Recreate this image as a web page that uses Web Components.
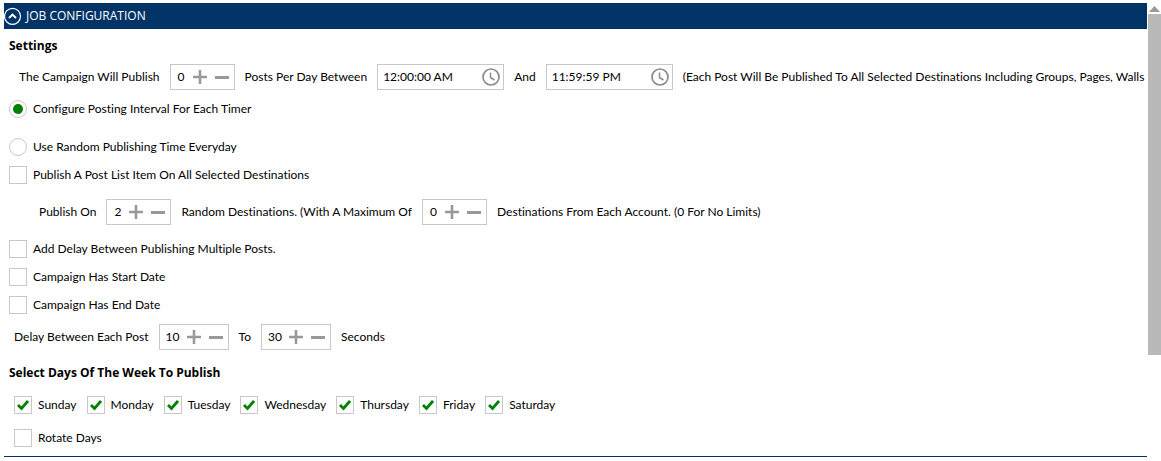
<!DOCTYPE html>
<html lang="en">
<head>
<meta charset="utf-8">
<title>Job Configuration</title>
<style>
  html, body {
    height: 100%;
    margin: 0;
  }
  body {
    background: #fff;
    color: #000;
    font: 12px/16px Lato, "Noto Sans", sans-serif;
    font-variant-ligatures: none;
    --heading-font: "Open Sans", "Noto Sans", sans-serif;
    --navy: #003366;
    --line: #c8c8c8;
    --glyph: #999;
    --green: #008000;
  }
</style>
</head>
<body>
<scroll-frame>
  <config-panel heading="JOB CONFIGURATION">
    <panel-title>Settings</panel-title>
    <field-row level="2">
      <span>The Campaign Will Publish</span>
      <number-stepper value="0" label="Posts per day"></number-stepper>
      <span>Posts Per Day Between</span>
      <time-box value="12:00:00 AM" label="Start time"></time-box>
      <span>And</span>
      <time-box value="11:59:59 PM" label="End time"></time-box>
      <span>(Each Post Will Be Published To All Selected Destinations Including Groups, Pages, Walls</span>
    </field-row>
    <radio-set options='["Configure Posting Interval For Each Timer", "Use Random Publishing Time Everyday"]'></radio-set>
    <check-option>Publish A Post List Item On All Selected Destinations</check-option>
    <field-row level="3">
      <span>Publish On</span>
      <number-stepper value="2" label="Random destinations"></number-stepper>
      <span>Random Destinations. (With A Maximum Of</span>
      <number-stepper value="0" label="Maximum destinations per account"></number-stepper>
      <span>Destinations From Each Account. (0 For No Limits)</span>
    </field-row>
    <check-option>Add Delay Between Publishing Multiple Posts.</check-option>
    <check-option>Campaign Has Start Date</check-option>
    <check-option>Campaign Has End Date</check-option>
    <field-row level="1">
      <span>Delay Between Each Post</span>
      <number-stepper value="10" label="Minimum delay"></number-stepper>
      <span>To</span>
      <number-stepper value="30" label="Maximum delay"></number-stepper>
      <span>Seconds</span>
    </field-row>
    <panel-title spaced>Select Days Of The Week To Publish</panel-title>
    <field-row level="1" spaced>
      <check-option checked>Sunday</check-option>
      <check-option checked>Monday</check-option>
      <check-option checked>Tuesday</check-option>
      <check-option checked>Wednesday</check-option>
      <check-option checked>Thursday</check-option>
      <check-option checked>Friday</check-option>
      <check-option checked>Saturday</check-option>
    </field-row>
    <field-row level="1" spaced>
      <check-option>Rotate Days</check-option>
    </field-row>
  </config-panel>
</scroll-frame>

<script>
class ScrollFrame extends HTMLElement {
  constructor() {
    super();
    this.attachShadow({ mode: 'open' }).innerHTML = `
      <style>
        :host {
          display: flex;
          height: 100%;
          overflow: hidden;
        }
        .content {
          flex: 1;
          min-width: 0;
          padding: 3px 1px 0 4px;
        }
        .bar {
          flex: none;
          display: flex;
          flex-direction: column;
          width: 13px;
        }
        .bar button {
          border: 0;
          padding: 3px 0 0 1px;
          height: 14px;
          background: none;
        }
        .bar svg {
          display: block;
        }
        .thumb {
          height: 74%;
          background: #b9b9b9;
        }
      </style>
      <div class="content"><slot></slot></div>
      <div class="bar">
        <button type="button" aria-label="Scroll up">
          <svg width="11" height="6"><path d="M0 6 5.500 0 11 6z" fill="#999"/></svg>
        </button>
        <div class="thumb"></div>
      </div>
    `;
  }
}

class ConfigPanel extends HTMLElement {
  constructor() {
    super();
    this.attachShadow({ mode: 'open' });
  }

  connectedCallback() {
    this.shadowRoot.innerHTML = `
      <style>
        :host {
          display: block;
          border-bottom: 1px solid var(--navy);
        }
        header {
          display: flex;
          align-items: center;
          gap: 4px;
          height: 26px;
          background: var(--navy);
          color: #fff;
        }
        button {
          border: 0;
          padding: 0;
          background: none;
          cursor: pointer;
        }
        svg {
          display: block;
        }
        h1 {
          margin: 0;
          font: inherit;
          font-family: var(--heading-font);
        }
        .body {
          display: flex;
          flex-direction: column;
          gap: 10px;
          padding: 9px 0 9px 5px;
          overflow: hidden;
        }
        .body[hidden] {
          display: none;
        }
      </style>
      <header>
        <button type="button" aria-label="Toggle section" aria-expanded="true">
          <svg width="18" height="18" fill="none" stroke="#fff">
            <circle cx="8.500" cy="9.300" r="8" stroke-width="1.200"/>
            <path d="M5 11 8.500 7.600 12 11" stroke-width="2"/>
          </svg>
        </button>
        <h1>${this.getAttribute('heading')}</h1>
      </header>
      <div class="body"><slot></slot></div>
    `;
    const button = this.shadowRoot.querySelector('button');
    const body = this.shadowRoot.querySelector('.body');
    button.addEventListener('click', () => {
      body.hidden = !body.hidden;
      button.setAttribute('aria-expanded', String(!body.hidden));
    });
  }
}

class PanelTitle extends HTMLElement {
  constructor() {
    super();
    this.attachShadow({ mode: 'open' }).innerHTML = `
      <style>
        :host {
          display: block;
        }
        :host([spaced]) {
          padding-top: 5px;
        }
        h2 {
          margin: 0;
          font: inherit;
          font-family: var(--heading-font);
          font-weight: bold;
        }
      </style>
      <h2><slot></slot></h2>
    `;
  }
}

class FieldRow extends HTMLElement {
  constructor() {
    super();
    this.attachShadow({ mode: 'open' }).innerHTML = `
      <style>
        :host {
          display: flex;
          align-items: center;
          gap: 10px;
          white-space: nowrap;
        }
        :host([level="1"]) {
          padding-left: 5px;
        }
        :host([level="2"]) {
          padding-left: 10px;
        }
        :host([level="3"]) {
          padding: 5px 0 5px 30px;
        }
        :host([spaced]) {
          padding-top: 5px;
        }
        ::slotted(*) {
          flex: none;
        }
      </style>
      <slot></slot>
    `;
  }
}

class NumberStepper extends HTMLElement {
  constructor() {
    super();
    this.attachShadow({ mode: 'open' });
  }

  connectedCallback() {
    const label = this.getAttribute('label');
    this.shadowRoot.innerHTML = `
      <style>
        :host {
          display: flex;
          align-items: center;
          box-sizing: border-box;
          height: 26px;
          padding: 0 5px 0 3px;
          border: 1px solid var(--line);
        }
        input {
          width: 15px;
          margin: 0 4px 0 0;
          padding: 0;
          border: 0;
          outline: 0;
          background: none;
          color: inherit;
          font: inherit;
          text-align: center;
        }
        input.wide {
          width: 20px;
        }
        button {
          padding: 0;
          border: 0;
          background: none;
          cursor: pointer;
        }
        button + button {
          margin-left: 8px;
        }
        svg {
          display: block;
        }
      </style>
      <input type="text" inputmode="numeric" aria-label="${label}" value="${this.getAttribute('value')}">
      <button type="button" data-step="1" aria-label="Increase">
        <svg width="14" height="14" stroke="var(--glyph)" stroke-width="2.600"><path d="M7 0V14M0 7H14"/></svg>
      </button>
      <button type="button" data-step="-1" aria-label="Decrease">
        <svg width="14" height="14" fill="var(--glyph)"><path d="M0 6h14v3H0z"/></svg>
      </button>
    `;
    this.input = this.shadowRoot.querySelector('input');
    this.input.addEventListener('input', () => this.fit());
    this.shadowRoot.querySelectorAll('button').forEach(button => {
      button.addEventListener('click', () => {
        const next = (parseInt(this.input.value) || 0) + parseInt(button.dataset.step);
        this.input.value = Math.max(0, next);
        this.fit();
      });
    });
    this.fit();
  }

  fit() {
    this.input.classList.toggle('wide', this.input.value.length > 1);
  }
}

class TimeBox extends HTMLElement {
  constructor() {
    super();
    this.attachShadow({ mode: 'open' });
  }

  connectedCallback() {
    this.shadowRoot.innerHTML = `
      <style>
        :host {
          display: flex;
          align-items: center;
          box-sizing: border-box;
          width: 127px;
          height: 26px;
          padding: 0 3px 0 5px;
          border: 1px solid var(--line);
        }
        input {
          flex: 1;
          min-width: 0;
          padding: 0;
          border: 0;
          outline: 0;
          background: none;
          color: inherit;
          font: inherit;
        }
        button {
          padding: 0;
          border: 0;
          background: none;
          cursor: pointer;
        }
        svg {
          display: block;
        }
      </style>
      <input type="text" aria-label="${this.getAttribute('label')}" value="${this.getAttribute('value')}">
      <button type="button" aria-label="Pick a time">
        <svg width="18" height="18" fill="none" stroke="#8c8c8c">
          <circle cx="9" cy="9" r="8" stroke-width="1.700"/>
          <path d="M8.500 4.500V9.500L12.500 12" stroke-width="1.500"/>
        </svg>
      </button>
    `;
  }
}

class CheckOption extends HTMLElement {
  constructor() {
    super();
    this.attachShadow({ mode: 'open' });
  }

  connectedCallback() {
    this.shadowRoot.innerHTML = `
      <style>
        :host {
          display: flex;
        }
        label {
          display: flex;
          align-items: center;
          gap: 6px;
        }
        .box {
          display: grid;
          place-items: center;
        }
        input, svg {
          grid-area: 1 / 1;
        }
        input {
          appearance: none;
          width: 18px;
          height: 18px;
          margin: 0;
          border: 1px solid var(--line);
          background: #fff;
        }
        svg {
          visibility: hidden;
          pointer-events: none;
        }
        input:checked + svg {
          visibility: visible;
        }
      </style>
      <label>
        <span class="box">
          <input type="checkbox" ${this.hasAttribute('checked') ? 'checked' : ''}>
          <svg width="12" height="12" fill="none" stroke="var(--green)"><path d="M1 6 4.500 9.500 11 2" stroke-width="2.800"/></svg>
        </span>
        <span><slot></slot></span>
      </label>
    `;
  }
}

// Both radios live in one shadow root so that they form a single group
class RadioSet extends HTMLElement {
  constructor() {
    super();
    this.attachShadow({ mode: 'open' });
  }

  connectedCallback() {
    const options = JSON.parse(this.getAttribute('options')) || [];
    this.shadowRoot.innerHTML = `
      <style>
        :host {
          display: flex;
          flex-direction: column;
          align-items: flex-start;
          gap: 20px;
        }
        label {
          display: flex;
          align-items: center;
          gap: 6px;
        }
        input {
          appearance: none;
          box-sizing: border-box;
          width: 18px;
          height: 18px;
          margin: 0;
          padding: 3px;
          border: 1px solid var(--line);
          border-radius: 50%;
        }
        input:checked {
          background: var(--green) content-box;
        }
      </style>
      ${options.map((text, index) => `
        <label>
          <input type="radio" name="mode" ${index === 0 ? 'checked' : ''}>
          <span>${text}</span>
        </label>
      `).join('')}
    `;
  }
}

customElements.define('scroll-frame', ScrollFrame);
customElements.define('config-panel', ConfigPanel);
customElements.define('panel-title', PanelTitle);
customElements.define('field-row', FieldRow);
customElements.define('number-stepper', NumberStepper);
customElements.define('time-box', TimeBox);
customElements.define('check-option', CheckOption);
customElements.define('radio-set', RadioSet);
</script>
</body>
</html>
